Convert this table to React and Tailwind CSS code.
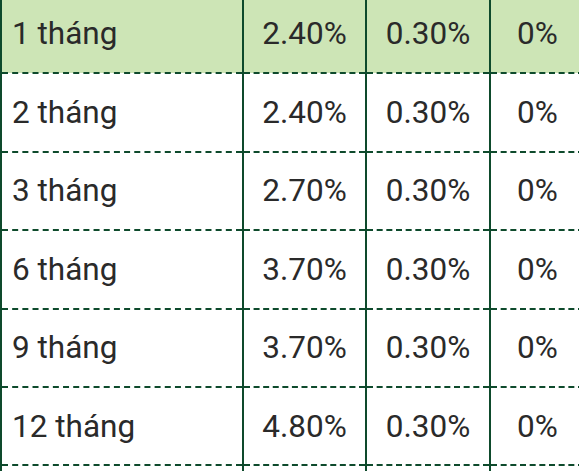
import React from "react";

const rows = [
  ["1 tháng", "2.40%", "0.30%", "0%"],
  ["2 tháng", "2.40%", "0.30%", "0%"],
  ["3 tháng", "2.70%", "0.30%", "0%"],
  ["6 tháng", "3.70%", "0.30%", "0%"],
  ["9 tháng", "3.70%", "0.30%", "0%"],
  ["12 tháng", "4.80%", "0.30%", "0%"],
  ["", "", "", ""],
];

const cell =
  "h-[78.4px] p-0 border-t-0 border-r-2 border-b-2 border-[#0e4a2c] [border-style:solid_solid_dashed_solid]";

export default function App() {
  return (
    <div className="w-[579px] h-[471px] overflow-hidden bg-white">
      <table
        className="table-fixed border-collapse w-[584px] -mt-[5px] text-[31.5px] text-[#2a2a2a]"
        style={{ fontFamily: "Roboto, 'Liberation Sans', sans-serif" }}
      >
        <colgroup>
          <col className="w-[242px]" />
          <col className="w-[123px]" />
          <col className="w-[124px]" />
          <col className="w-[95px]" />
        </colgroup>
        <tbody>
          {rows.map((r, i) => (
            <tr key={i} className={i === 0 ? "bg-[#cde5b6]" : "bg-white"}>
              <td className={`${cell} border-l-2 pl-[10px] text-left`}>{r[0]}</td>
              <td className={`${cell} text-center`}>{r[1]}</td>
              <td className={`${cell} text-center`}>{r[2]}</td>
              <td className={`${cell} text-center`}>{r[3]}</td>
            </tr>
          ))}
        </tbody>
      </table>
    </div>
  );
}
